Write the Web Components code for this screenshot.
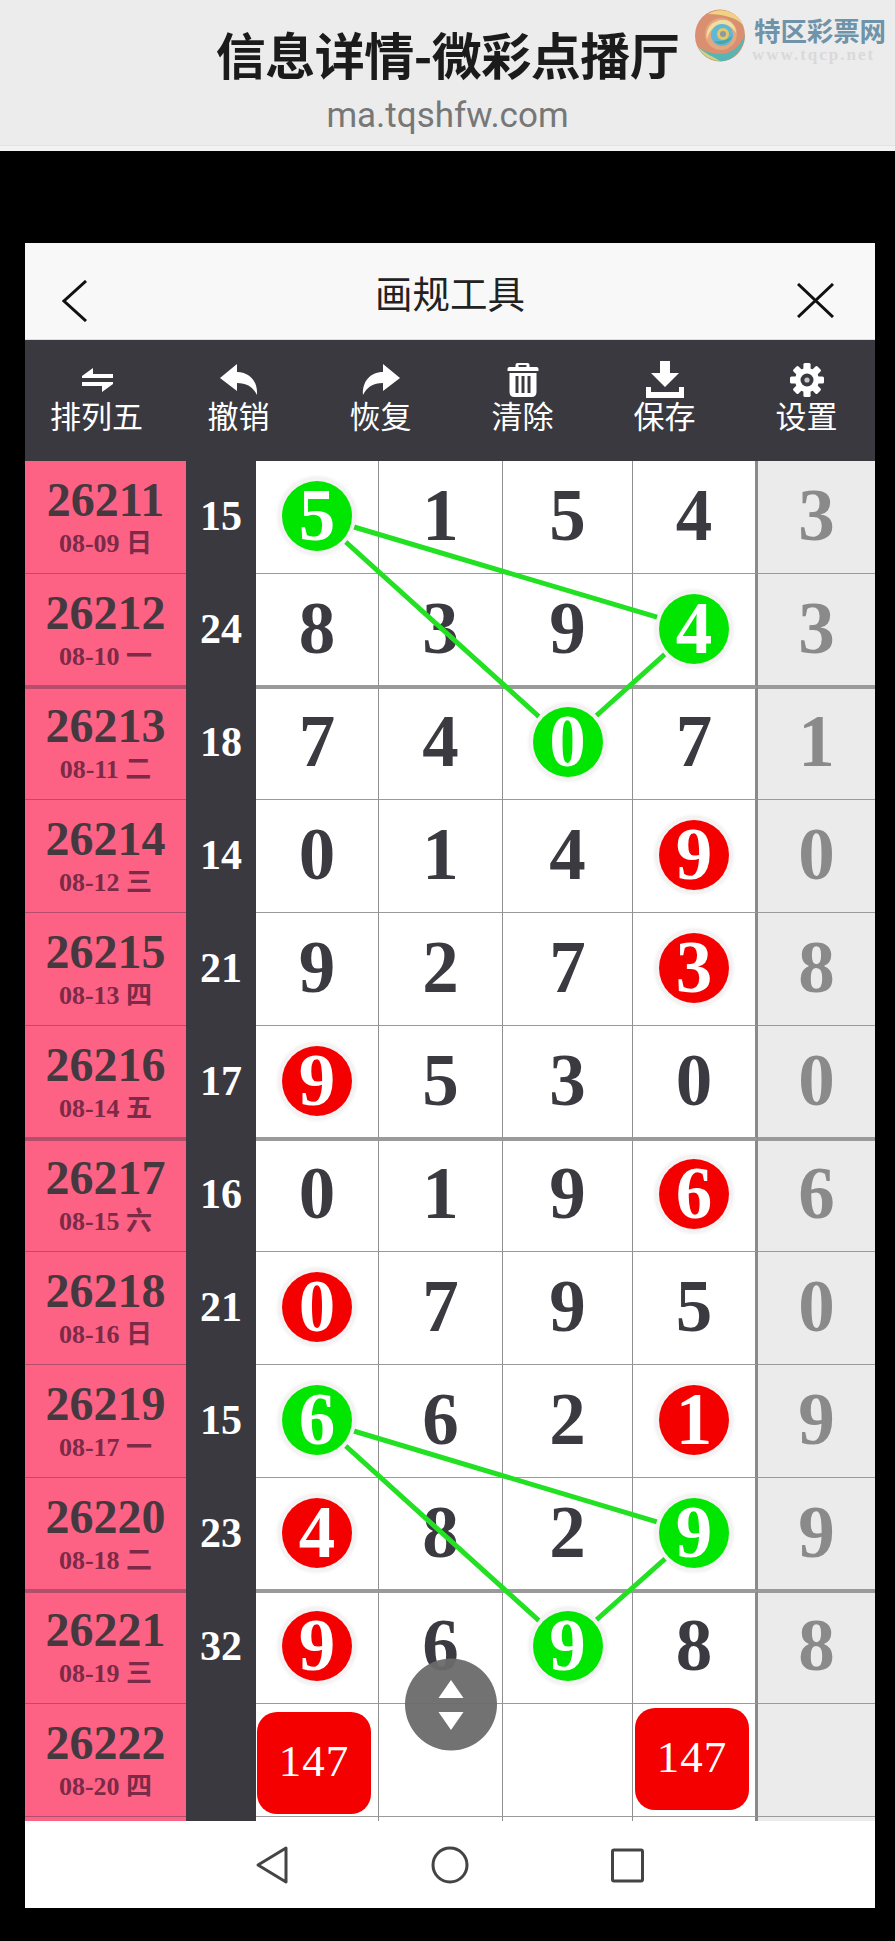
<!DOCTYPE html>
<html lang="zh">
<head>
<meta charset="utf-8">
<title>画规工具</title>
<style>
  html, body { margin: 0; background: #000; }
  body { width: 895px; height: 1941px; overflow: hidden; font-family: "Noto Sans CJK SC", sans-serif; }
  app-shell { margin: 92px 20px 0 25px; }
</style>
</head>
<body>
<top-banner title-text="信息详情-微彩点播厅" url="ma.tqshfw.com"></top-banner>
<app-shell>
  <tool-nav>画规工具</tool-nav>
  <tool-bar>
    <tool-item icon="swap">排列五</tool-item>
    <tool-item icon="undo">撤销</tool-item>
    <tool-item icon="redo">恢复</tool-item>
    <tool-item icon="trash">清除</tool-item>
    <tool-item icon="save">保存</tool-item>
    <tool-item icon="gear">设置</tool-item>
  </tool-bar>
  <draw-grid></draw-grid>
  <sys-nav></sys-nav>
</app-shell>

<script>
customElements.define('top-banner', class extends HTMLElement {
  connectedCallback() {
    this.attachShadow({mode: 'open'}).innerHTML = `
      <style>
        :host { display: flex; flex-direction: column; align-items: center; position: relative; height: 146px; background: #ececec;
          border-bottom: 5px solid #f2f2f2; box-shadow: inset 0 -1px 0 #e2e2e2; }
        h1 { margin: 23px 0 0; font: 700 50px/60px "Noto Sans CJK SC", sans-serif; color: #1b1b1b; letter-spacing: -.5px; }
        p { margin: 11px 0 0; font: 400 35px/44px Roboto, sans-serif; color: #777; }
        .logo { position: absolute; left: 694px; top: 9px; width: 52px; height: 53px; filter: blur(.6px); }
        .mark { position: absolute; left: 754px; top: 15px; font: 700 26.500px/30px "Noto Sans CJK SC", sans-serif; color: #6f93a9; white-space: nowrap; letter-spacing: -.1px; }
        .www { position: absolute; left: 752px; top: 46px; font: 700 17px/18px "Liberation Serif", serif; color: #d9d9d9; letter-spacing: 2px; white-space: nowrap; }
      </style>
      <h1>${this.getAttribute('title-text')}</h1>
      <p>${this.getAttribute('url')}</p>
      <svg class="logo" viewBox="0 0 52 53">
        <ellipse cx="26" cy="26.5" rx="25" ry="26" fill="#d98f70"/>
        <path d="M14 5C24-2 42 0 49 16C43 9 30 5 14 5Z" fill="#efd384"/>
        <path d="M4 38C10 48 22 53 30 52C42 50 50 38 51 26C46 38 36 46 24 45C15 44 8 41 4 38Z" fill="#58b5b4"/>
        <path d="M4 38C8 46 16 51 26 52C18 47 10 44 4 38Z" fill="#cdd684"/>
        <ellipse cx="27" cy="25" rx="16" ry="16" fill="#e6a77e"/>
        <path d="M13 30C11 18 20 10 31 11C38 12 42 18 42 24C38 17 32 15 26 16C19 17 15 23 13 30Z" fill="#efe0a0"/>
        <ellipse cx="28" cy="26" rx="11" ry="11" fill="#62b7d6"/>
        <path d="M20 32C25 38 36 35 39 26C36 30 28 33 20 32Z" fill="#4aa6a0"/>
        <ellipse cx="29" cy="25" rx="6" ry="6" fill="#e4c766"/>
        <ellipse cx="29" cy="25" rx="3" ry="3" fill="#8c9aa0"/>
      </svg>
      <div class="mark">特区彩票网</div>
      <div class="www">www.tqcp.net</div>`;
  }
});

customElements.define('app-shell', class extends HTMLElement {
  connectedCallback() {
    this.attachShadow({mode: 'open'}).innerHTML = `
      <style>:host { display: block; width: 850px; position: relative; }</style>
      <slot></slot>`;
  }
});

customElements.define('tool-nav', class extends HTMLElement {
  connectedCallback() {
    this.attachShadow({mode: 'open'}).innerHTML = `
      <style>
        :host { display: grid; grid-template-columns: 1fr auto 1fr; align-items: start; height: 97px; box-sizing: border-box;
          background: #f8f8f8; border-bottom: 1px solid #ddd; }
        svg { display: block; fill: none; stroke: #111; stroke-width: 3; }
        .back { margin: 37px 0 0 37px; }
        .close { margin: 40px 41px 0 0; justify-self: end; }
        span { font: 400 37.500px/48px "Noto Sans CJK SC", sans-serif; color: #222; margin-top: 25px; }
      </style>
      <svg class="back" width="26" height="42" viewBox="0 0 26 42"><path d="M24 1 2 21 24 41"/></svg>
      <span><slot></slot></span>
      <svg class="close" width="37" height="35" viewBox="0 0 37 35"><path d="M1 1 36 34M36 1 1 34"/></svg>`;
  }
});

customElements.define('tool-bar', class extends HTMLElement {
  connectedCallback() {
    this.attachShadow({mode: 'open'}).innerHTML = `
      <style>:host { display: grid; grid-template-columns: repeat(6, 142px); padding-left: .5px; height: 121px; background: #3a3940; }</style>
      <slot></slot>`;
  }
});

const TOOL_ICONS = {
  swap: '<path d="M11 0 0 8V10H31V6H11ZM20 24 31 16V14H0V18H20Z" transform="translate(4 7)"/>',
  undo: '<path d="M0 14 17 0V8C30 8 38 18 37 31C33 23 27 19 17 19V27Z" transform="translate(0 3)"/>',
  redo: '<path d="M37 14 20 0V8C7 8 -1 18 0 31C4 23 10 19 20 19V27Z" transform="translate(1 3)"/>',
  trash: '<path d="M11 1H21Q23 1 23 3V5H30Q32 5 32 7V9H1V7Q1 5 3 5H9V3Q9 1 11 1ZM12 3V5H20V3ZM3 11H30V30Q30 35 25 35H8Q3 35 3 30ZM9 14V31H12V14ZM15 14V31H18V14ZM21 14V31H24V14Z" fill-rule="evenodd" transform="translate(2.500 1)"/>',
  save: '<path d="M14 0H24V12H33L19 26 5 12H14ZM0 26H5V31H33V26H38V37H0Z"/>',
  gear: '<g transform="translate(19 19)"><circle r="12"/><g><rect x="-3.600" y="-17" width="7.200" height="34" rx="1.500"/><rect x="-3.600" y="-17" width="7.200" height="34" rx="1.500" transform="rotate(45)"/><rect x="-3.600" y="-17" width="7.200" height="34" rx="1.500" transform="rotate(90)"/><rect x="-3.600" y="-17" width="7.200" height="34" rx="1.500" transform="rotate(135)"/></g><circle r="6.500" fill="#3a3940"/><circle r="2.600" fill="#c8c8c8"/></g>'
};

customElements.define('tool-item', class extends HTMLElement {
  connectedCallback() {
    this.attachShadow({mode: 'open'}).innerHTML = `
      <style>
        :host { display: flex; flex-direction: column; align-items: center; color: #fff; }
        svg { display: block; width: 38px; height: 38px; margin-top: 21px; fill: #fff; }
        span { font: 400 31px/38px "Noto Sans CJK SC", sans-serif; margin-top: -3px; }
      </style>
      <svg viewBox="0 0 38 38">${TOOL_ICONS[this.getAttribute('icon')]}</svg>
      <span><slot></slot></span>`;
  }
});

customElements.define('num-ball', class extends HTMLElement {
  connectedCallback() {
    const bg = this.getAttribute('color') === 'green' ? '#00e600' : '#f50000';
    this.attachShadow({mode: 'open'}).innerHTML = `
      <style>
        :host { display: flex; align-items: center; justify-content: center; position: relative; z-index: 2;
          width: 70px; height: 70px; border-radius: 50%; background: ${bg}; color: #fff;
          box-shadow: 0 0 0 4px #f4f2f2, 0 0 3px 5px rgba(0,0,0,.05); }
      </style>
      <slot></slot>`;
  }
});

customElements.define('draw-row', class extends HTMLElement {
  connectedCallback() {
    const [no, date, sum, cells, last, thick, afterThick] = this.data;
    // the heavy line every 4 rows straddles the row edge, half in each row
    const bb = thick ? 2 : 1;
    const bt = afterThick ? 2 : 0;
    const lines = `border-bottom: ${bb}px solid var(--line); border-top: ${bt}px solid var(--line); padding-top: ${bb}px; padding-bottom: ${bt + 3}px;`;
    const cellHtml = cells.map(c => {
      if (c === 'b1') return '<div class="c"><div class="tag t1">147</div></div>';
      if (c === 'b2') return '<div class="c"><div class="tag t2">147</div></div>';
      if (c === '') return '<div class="c"></div>';
      const m = String(c).match(/^(\d)([gr])?$/);
      if (m[2]) return `<div class="c"><num-ball color="${m[2] === 'g' ? 'green' : 'red'}">${m[1]}</num-ball></div>`;
      return `<div class="c">${m[1]}</div>`;
    }).join('');
    this.attachShadow({mode: 'open'}).innerHTML = `
      <style>
        :host { display: grid; grid-template-columns: 161px 70px 123px 124px 130px 125px 117px; height: 113px; --line: #9a9a9a; }
        .no { --line: #b34f6c; background: #fd6285; border-bottom: ${bb}px solid var(--line); border-top: ${bt}px solid var(--line); box-sizing: border-box; text-align: center; color: #45383f; font: 700 48px/50px "Liberation Serif", "Noto Sans CJK SC", serif; padding-top: ${14 - bt}px; }
        .no small { display: block; font: 700 26px/28px "Liberation Serif", "Noto Sans CJK SC", serif; color: #7b2a47; margin-top: 5px; }
        .sum { background: #3a3940; color: #fff; display: flex; align-items: center; justify-content: center; padding-bottom: 4px; box-sizing: border-box; font: 700 42px "Liberation Serif", serif; }
        .c { display: flex; align-items: center; justify-content: center; box-sizing: border-box; background: #fff;
          ${lines} border-right: 1px solid #8f8f8f; color: #3a3a40; font: 700 73px "Liberation Serif", serif; position: relative; }
        .c:nth-last-child(2) { border-right: 3px solid #8a8a8a; }
        .last { background: #ebebeb; color: #8a8a8a; ${lines} box-sizing: border-box; display: flex; align-items: center; justify-content: center; font: 700 73px "Liberation Serif", serif; }
        .tag { position: absolute; width: 114px; height: 102px; box-sizing: border-box; padding-bottom: 5px; border-radius: 20px; background: #f50000; color: #fff;
          display: flex; align-items: center; justify-content: center; font: 400 45px "Liberation Serif", serif; letter-spacing: 1px; }
        .t1 { left: 1px; top: 8px; }
        .t2 { left: 2px; top: 4px; }
      </style>
      <div class="no">${no}<small>${date}</small></div>
      <div class="sum">${sum}</div>
      ${cellHtml}
      <div class="last">${last}</div>`;
  }
});

customElements.define('draw-grid', class extends HTMLElement {
  connectedCallback() {
    const rows = [
      ['26211', '08-09 日', 15, ['5g', 1, 5, 4], 3],
      ['26212', '08-10 一', 24, [8, 3, 9, '4g'], 3, true],
      ['26213', '08-11 二', 18, [7, 4, '0g', 7], 1, false, true],
      ['26214', '08-12 三', 14, [0, 1, 4, '9r'], 0],
      ['26215', '08-13 四', 21, [9, 2, 7, '3r'], 8],
      ['26216', '08-14 五', 17, ['9r', 5, 3, 0], 0, true],
      ['26217', '08-15 六', 16, [0, 1, 9, '6r'], 6, false, true],
      ['26218', '08-16 日', 21, ['0r', 7, 9, 5], 0],
      ['26219', '08-17 一', 15, ['6g', 6, 2, '1r'], 9],
      ['26220', '08-18 二', 23, ['4r', 8, 2, '9g'], 9, true],
      ['26221', '08-19 三', 32, ['9r', 6, '9g', 8], 8, false, true],
      ['26222', '08-20 四', '', ['b1', '', '', 'b2'], ''],
      ['', '', '', ['', '', '', ''], '']
    ];
    const root = this.attachShadow({mode: 'open'});
    root.innerHTML = `
      <style>
        :host { display: block; position: relative; height: 1360px; overflow: hidden; background: #3a3940; }
        svg { position: absolute; left: 0; top: 0; z-index: 1; pointer-events: none; }
        polygon { fill: none; stroke: #22e022; stroke-width: 5; }
        .fab { position: absolute; left: 380px; top: 1197px; width: 92px; height: 93px; z-index: 3; }
      </style>
      <svg width="850" height="1360">
        <polygon points="292,55 669,167 542,281"/>
        <polygon points="292,959 669,1072 542,1185"/>
      </svg>
      <svg class="fab" viewBox="0 0 92 93">
        <circle cx="46" cy="46.500" r="46" fill="#6a6a6a" fill-opacity=".95"/>
        <path d="M46 22 58.500 40H33.500ZM46 72 33.500 54H58.500Z" fill="#fff"/>
      </svg>`;
    rows.forEach(r => {
      const row = document.createElement('draw-row');
      row.data = r;
      root.append(row);
    });
  }
});

customElements.define('sys-nav', class extends HTMLElement {
  connectedCallback() {
    this.attachShadow({mode: 'open'}).innerHTML = `
      <style>
        :host { display: block; height: 87px; background: #fff; }
        svg { display: block; fill: none; stroke: #444; stroke-width: 3; }
      </style>
      <svg width="850" height="87">
        <path d="M261 27 233 44 261 61Z" stroke-linejoin="round"/>
        <circle cx="425" cy="44" r="17"/>
        <rect x="587.500" y="29" width="30" height="31" rx="1.500"/>
      </svg>`;
  }
});
</script>
</body>
</html>
